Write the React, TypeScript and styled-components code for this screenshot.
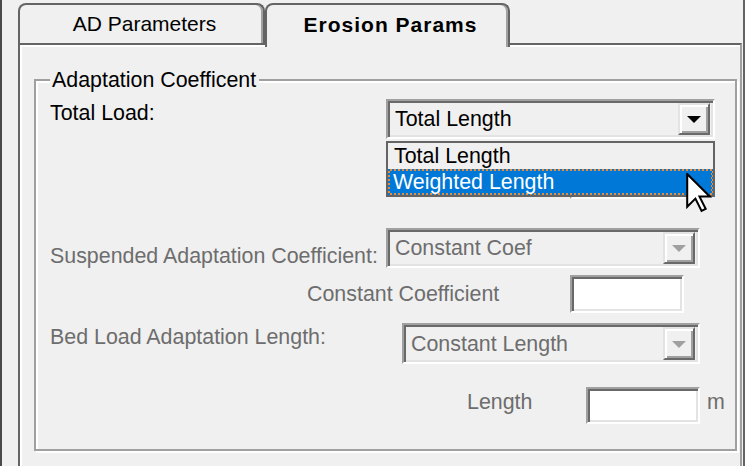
import React from "react";
import styled, { createGlobalStyle } from "styled-components";

const GlobalStyle = createGlobalStyle`
  html, body { margin: 0; padding: 0; background: #f0f0f0; }
  body {
    font-family: "Liberation Sans", Arial, sans-serif;
    font-size: 21.4px;
    color: #000;
  }
  * { box-sizing: border-box; }
`;

const Frame = styled.div`
  width: 745px;
  height: 466px;
  overflow: hidden;
  background: #f0f0f0;
  border-left: 2px solid #4a4a4a;
  border-right: 2px solid #646464;
  padding: 0 1px 0 16px;
  display: flex;
  flex-direction: column;
`;

const TabStrip = styled.div`
  display: flex;
  align-items: flex-start;
  padding-top: 3px;
  margin-bottom: -4px;
  position: relative;
  z-index: 1;
`;

const Tab = styled.div<{ $active?: boolean }>`
  width: ${(p) => (p.$active ? 245 : 247)}px;
  height: ${(p) => (p.$active ? 44 : 40)}px;
  border: 2px solid #646464;
  border-bottom: none;
  border-radius: 8px 8px 0 0;
  box-shadow: inset -2px 0 0 #a0a0a0;
  background: #f0f0f0;
  display: flex;
  justify-content: center;
  padding-top: ${(p) => (p.$active ? 8 : 7)}px;
  padding-left: 6px;
  font-size: 21px;
  font-weight: ${(p) => (p.$active ? 700 : 400)};
  letter-spacing: ${(p) => (p.$active ? "1px" : "0")};
  line-height: 24px;
  white-space: nowrap;
`;

const Panel = styled.div`
  flex: 1;
  border-top: 2px solid #646464;
  border-left: 2px solid #646464;
  border-right: 2px solid #a0a0a0;
  box-shadow: inset 2px 2px 0 #fff;
  padding: 34px 0 0 14px;
`;

const GroupBox = styled.div`
  position: relative;
  width: 703px;
  height: 372px;
  border: 2px solid #a0a0a0;
  box-shadow: inset 2px 2px 0 #fff, 2px 2px 0 #fff;
  padding: 0 0 0 14px;
  display: flex;
  flex-direction: column;
  align-items: flex-start;
`;

const Legend = styled.div`
  position: absolute;
  left: 14px;
  top: -13px;
  padding: 0 3px 0 2px;
  background: #f0f0f0;
  line-height: 24px;
  white-space: nowrap;
`;

const Row = styled.div<{ $mt: number; $indent?: number }>`
  position: relative;
  display: flex;
  align-items: flex-start;
  margin-top: ${(p) => p.$mt}px;
  padding-left: ${(p) => p.$indent ?? 0}px;
`;

const Label = styled.div<{ $w: number; $mt: number; $disabled?: boolean }>`
  width: ${(p) => p.$w}px;
  margin-top: ${(p) => p.$mt}px;
  line-height: 24px;
  white-space: nowrap;
  color: ${(p) => (p.$disabled ? "#6d6d6d" : "#000")};
`;

const Unit = styled.div<{ $disabled?: boolean }>`
  margin-left: 7px;
  margin-top: 3px;
  line-height: 24px;
  color: ${(p) => (p.$disabled ? "#6d6d6d" : "#000")};
`;

const Sunken = styled.div<{ $w: number; $h: number }>`
  width: ${(p) => p.$w}px;
  height: ${(p) => p.$h}px;
  border: 2px solid;
  border-color: #a0a0a0 #fff #fff #a0a0a0;
  box-shadow: inset 2px 2px 0 #696969, inset -2px -2px 0 #e3e3e3;
`;

const Combo = styled(Sunken)`
  padding: 2px 3px 2px 2px;
  display: flex;
  align-items: stretch;
  background: #f0f0f0;
`;

const TextBox = styled(Sunken)`
  background: #fff;
`;

const ComboText = styled.div<{ $disabled?: boolean }>`
  flex: 1;
  padding-left: 5px;
  display: flex;
  align-items: center;
  line-height: 24px;
  white-space: nowrap;
  color: ${(p) => (p.$disabled ? "#6d6d6d" : "#000")};
`;

const ComboButton = styled.div`
  width: 32px;
  border: 2px solid;
  border-color: #e3e3e3 #696969 #696969 #e3e3e3;
  box-shadow: inset 2px 2px 0 #fff, inset -2px -2px 0 #a0a0a0;
  background: #f0f0f0;
  display: flex;
  align-items: center;
  justify-content: center;
`;

const Arrow = styled.div<{ $disabled?: boolean }>`
  width: 0;
  height: 0;
  margin-top: 1px;
  border-left: 7px solid transparent;
  border-right: 7px solid transparent;
  border-top: 7px solid ${(p) => (p.$disabled ? "#a0a0a0" : "#000")};
`;

const DropList = styled.div`
  position: absolute;
  left: 336px;
  top: 42px;
  width: 329px;
  height: 56px;
  border: 2px solid #646464;
  background: #f0f0f0;
  z-index: 2;
  display: flex;
  flex-direction: column;
`;

const ListItem = styled.div`
  height: 26px;
  line-height: 26px;
  padding-left: 6px;
  white-space: nowrap;
`;

const FocusRing = styled.div`
  height: 26px;
  padding: 2px;
  background: repeating-conic-gradient(#f28a2e 0 25%, #0078d7 0 50%) 0 0 / 4px 4px;
`;

const SelectedItem = styled.div`
  height: 22px;
  line-height: 22px;
  padding-left: 3px;
  background: #0078d7;
  color: #fff;
  white-space: nowrap;
`;

const Cursor = styled.svg`
  position: absolute;
  left: 298px;
  top: 30px;
  z-index: 3;
`;

function ComboBox({ w, h, value, disabled }: { w: number; h: number; value: string; disabled?: boolean }) {
  return (
    <Combo $w={w} $h={h}>
      <ComboText $disabled={disabled}>{value}</ComboText>
      <ComboButton>
        <Arrow $disabled={disabled} />
      </ComboButton>
    </Combo>
  );
}

export default function App() {
  return (
    <>
      <GlobalStyle />
      <Frame>
        <TabStrip>
          <Tab>AD Parameters</Tab>
          <Tab $active>Erosion Params</Tab>
        </TabStrip>
        <Panel>
          <GroupBox>
            <Legend>Adaptation Coefficent</Legend>

            <Row $mt={18}>
              <Label $w={336} $mt={2}>Total Load:</Label>
              <ComboBox w={329} h={40} value="Total Length" />
              <DropList>
                <ListItem>Total Length</ListItem>
                <FocusRing>
                  <SelectedItem>Weighted Length</SelectedItem>
                </FocusRing>
                <Cursor width="26" height="40" viewBox="0 0 12.5 19.5">
                  <path
                    d="M0.5 0.5 V16.5 L4.5 12.5 L7.5 18.5 L9.5 17.5 L6.5 11.5 H11.5 Z"
                    fill="#fff"
                    stroke="#000"
                    strokeWidth="1"
                    strokeLinejoin="miter"
                  />
                </Cursor>
              </DropList>
            </Row>

            <Row $mt={22} $indent={520}>
              <TextBox $w={114} $h={38} />
            </Row>

            <Row $mt={29}>
              <Label $w={336} $mt={16} $disabled>Suspended Adaptation Coefficient:</Label>
              <ComboBox w={314} h={40} value="Constant Coef" disabled />
            </Row>

            <Row $mt={7} $indent={257}>
              <Label $w={263} $mt={7} $disabled>Constant Coefficient</Label>
              <TextBox $w={114} $h={38} />
            </Row>

            <Row $mt={10}>
              <Label $w={352} $mt={2} $disabled>Bed Load Adaptation Length:</Label>
              <ComboBox w={298} h={41} value="Constant Length" disabled />
            </Row>

            <Row $mt={23} $indent={417}>
              <Label $w={119} $mt={3} $disabled>Length</Label>
              <TextBox $w={114} $h={37} />
              <Unit $disabled>m</Unit>
            </Row>
          </GroupBox>
        </Panel>
      </Frame>
    </>
  );
}
